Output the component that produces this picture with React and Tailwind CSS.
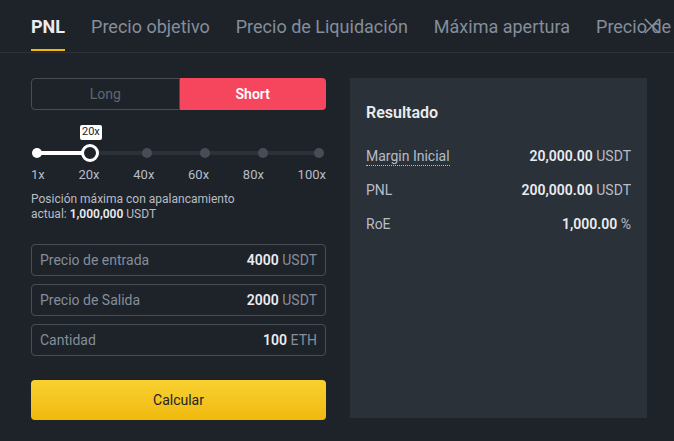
import React from "react";

const tabs = ["PNL", "Precio objetivo", "Precio de Liquidación", "Máxima apertura", "Precio de entrada"];
const marks = ["1x", "20x", "40x", "60x", "80x", "100x"];

const Field = ({ label, value, unit }) => (
  <div className="h-[32px] flex items-center justify-between px-[8px] border border-[#474d57] rounded-[4px]">
    <span className="text-[14px] text-[#848e9c]">{label}</span>
    <span className="text-[14px]">
      <span className="font-semibold text-[#eaecef]">{value}</span>{" "}
      <span className="text-[#848e9c]">{unit}</span>
    </span>
  </div>
);

const Row = ({ label, value, unit, dotted }) => (
  <div className="flex items-center justify-between h-[34px]">
    <span
      className={
        "text-[14px] text-[#b7bdc6] " +
        (dotted ? "border-b border-dotted border-[#b7bdc6] leading-[18px]" : "")
      }
    >
      {label}
    </span>
    <span className="text-[14px]">
      <span className="font-semibold text-[#eaecef]">{value}</span>{" "}
      <span className="text-[#b7bdc6]">{unit}</span>
    </span>
  </div>
);

export default function App() {
  return (
    <div
      className="relative w-[674px] h-[441px] overflow-hidden bg-[#1e2329] text-[#eaecef]"
      style={{ fontFamily: "Roboto, 'Liberation Sans', sans-serif" }}
    >
      {/* Tabs */}
      <div className="flex gap-[26px] pl-[31px] h-[53px] border-b border-[#2b3139] whitespace-nowrap">
        {tabs.map((t, i) => (
          <div key={t} className="relative flex items-center h-full">
            <span
              className={
                i === 0
                  ? "text-[18px] font-bold text-[#eaecef]"
                  : "text-[18px] text-[#848e9c]"
              }
            >
              {t}
            </span>
            {i === 0 && <div className="absolute left-0 right-0 bottom-[1px] h-[2px] bg-[#f0b90b]" />}
          </div>
        ))}
      </div>

      {/* Close */}
      <svg className="absolute left-[643px] top-[17px]" width="18" height="18" viewBox="0 0 18 18" fill="none">
        <path d="M2 2L16 16M16 2L2 16" stroke="#848e9c" strokeWidth="1.5" />
      </svg>

      <div className="flex gap-[24px] pl-[31px] pt-[25px]">
        {/* Left column */}
        <div className="w-[295px] flex flex-col">
          <div className="flex h-[32px]">
            <div className="flex-1 flex items-center justify-center border border-[#474d57] rounded-l-[4px] text-[14px] text-[#5e6673]">
              Long
            </div>
            <div className="flex-1 flex items-center justify-center bg-[#f6465d] rounded-r-[4px] text-[14px] font-semibold text-white">
              Short
            </div>
          </div>

          {/* Slider */}
          <div className="relative h-[76px] mt-[13px]">
            <div className="absolute left-[49px] top-[2px] px-[2px] h-[15px] flex items-center bg-white rounded-[2px] text-[11px] text-[#1e2329]">
              20x
            </div>
            <div className="absolute left-[6px] top-[28px] w-[282px] h-[4px] bg-[#2b3139]" />
            <div className="absolute left-[6px] top-[28px] w-[53px] h-[4px] bg-white" />
            <div className="absolute left-[1px] top-[25px] w-[10px] h-[10px] rounded-full bg-white" />
            {[116, 174, 232, 288].map((x) => (
              <div
                key={x}
                className="absolute top-[25px] w-[10px] h-[10px] rounded-full bg-[#474d57]"
                style={{ left: x - 5 }}
              />
            ))}
            <div className="absolute left-[50px] top-[21px] w-[18px] h-[18px] rounded-full border-[3px] border-white bg-[#1e2329]" />
            <div className="absolute left-0 right-0 top-[42px] flex justify-between text-[13px] text-[#b7bdc6]">
              {marks.map((m) => (
                <span key={m}>{m}</span>
              ))}
            </div>
          </div>

          <div className="text-[12px] leading-[15px] text-[#b7bdc6] -mt-[7px]">
            Posición máxima con apalancamiento
            <br />
            actual: <span className="font-semibold text-[#eaecef]">1,000,000</span> USDT
          </div>

          <div className="flex flex-col gap-[8px] mt-[22px]">
            <Field label="Precio de entrada" value="4000" unit="USDT" />
            <Field label="Precio de Salida" value="2000" unit="USDT" />
            <Field label="Cantidad" value="100" unit="ETH" />
          </div>

          <button className="mt-[24px] h-[40px] rounded-[4px] bg-gradient-to-b from-[#f8d12f] to-[#f0b90b] text-[14px] text-[#1e2329]">
            Calcular
          </button>
        </div>

        {/* Right panel */}
        <div className="w-[297px] h-[340px] bg-[#2b3139] px-[16px] pt-[23px]">
          <div className="text-[16px] font-semibold text-[#eaecef] mb-[14px]">Resultado</div>
          <Row label="Margin Inicial" value="20,000.00" unit="USDT" dotted />
          <Row label="PNL" value="200,000.00" unit="USDT" />
          <Row label="RoE" value="1,000.00" unit="%" />
        </div>
      </div>
    </div>
  );
}
